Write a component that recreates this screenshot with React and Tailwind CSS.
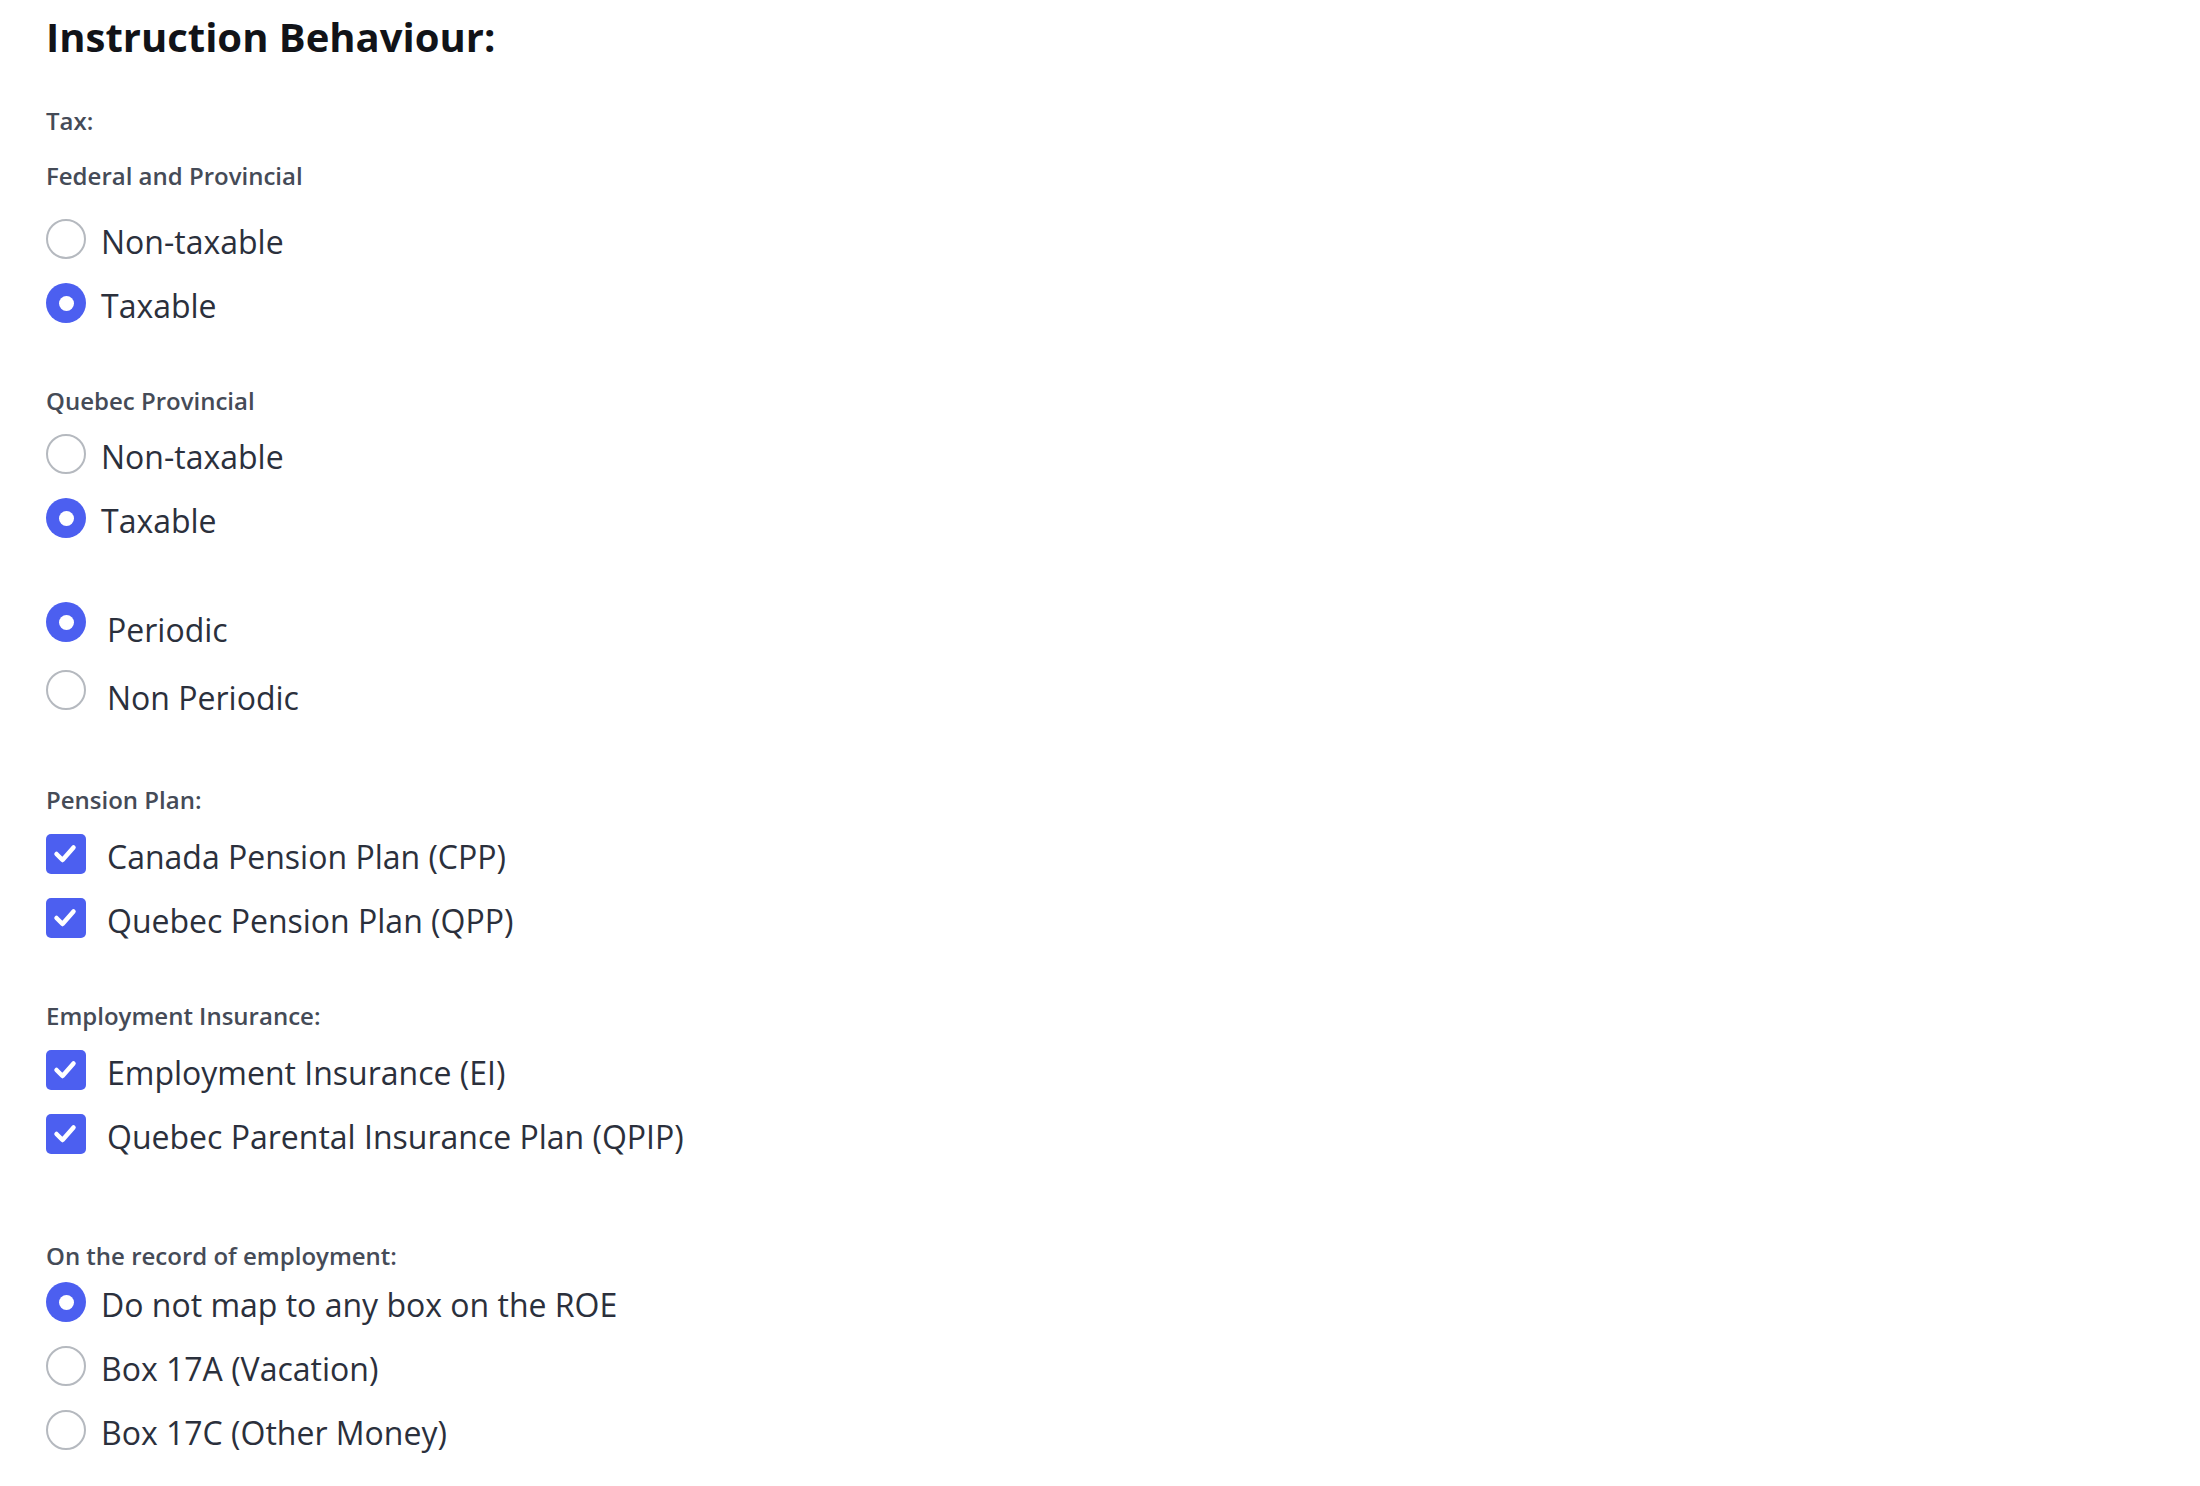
import React from "react";

const Radio = ({ checked }) =>
  checked ? (
    <span className="flex h-[40px] w-[40px] shrink-0 items-center justify-center rounded-full bg-[#4c5ff0]">
      <span className="h-[15px] w-[15px] rounded-full bg-white" />
    </span>
  ) : (
    <span className="h-[40px] w-[40px] shrink-0 rounded-full border-2 border-[#b5b9bf] bg-white" />
  );

const Check = () => (
  <span className="flex h-[40px] w-[40px] shrink-0 items-center justify-center rounded-[5px] bg-[#4c5ff0]">
    <svg width="40" height="40" viewBox="0 0 40 40" fill="none">
      <polyline
        points="10.5,20 16.5,26 27.5,13.5"
        stroke="white"
        strokeWidth="4.5"
        strokeLinecap="round"
        strokeLinejoin="round"
      />
    </svg>
  </span>
);

const RadioRow = ({ checked, label }) => (
  <div className="flex h-[64px] items-center gap-[15px]">
    <Radio checked={checked} />
    <span className="pt-[6px] text-[32px] leading-[40px] text-[#2b303c]">{label}</span>
  </div>
);

const PeriodicRow = ({ checked, label }) => (
  <div className="flex h-[68px] items-center gap-[21px]">
    <Radio checked={checked} />
    <span className="pt-[15px] text-[32px] leading-[40px] text-[#2b303c]">{label}</span>
  </div>
);

const CheckRow = ({ label }) => (
  <div className="flex h-[64px] items-center gap-[21px]">
    <Check />
    <span className="pt-[6px] text-[32px] leading-[40px] text-[#2b303c]">{label}</span>
  </div>
);

const Label = ({ children, className }) => (
  <div className={"text-[24px] font-semibold leading-[26px] text-[#454b57] " + className}>{children}</div>
);

export default function App() {
  return (
    <div
      className="min-h-[1486px] w-full bg-white pl-[46px] pt-[13px]"
      style={{ fontFamily: '"Open Sans", "Noto Sans", sans-serif' }}
    >
      <h1 className="text-[40px] font-bold leading-[48px] text-[#111318]">Instruction Behaviour:</h1>

      <Label className="mt-[47px]">Tax:</Label>
      <Label className="mt-[29px]">Federal and Provincial</Label>
      <div className="mt-[18px] flex flex-col">
        <RadioRow label="Non-taxable" />
        <RadioRow checked label="Taxable" />
      </div>

      <Label className="mt-[53px]">Quebec Provincial</Label>
      <div className="mt-[8px] flex flex-col">
        <RadioRow label="Non-taxable" />
        <RadioRow checked label="Taxable" />
      </div>

      <div className="mt-[38px] flex flex-col">
        <PeriodicRow checked label="Periodic" />
        <PeriodicRow label="Non Periodic" />
      </div>

      <Label className="mt-[63px]">Pension Plan:</Label>
      <div className="mt-[9px] flex flex-col">
        <CheckRow label="Canada Pension Plan (CPP)" />
        <CheckRow label="Quebec Pension Plan (QPP)" />
      </div>

      <Label className="mt-[53px]">Employment Insurance:</Label>
      <div className="mt-[9px] flex flex-col">
        <CheckRow label="Employment Insurance (EI)" />
        <CheckRow label="Quebec Parental Insurance Plan (QPIP)" />
      </div>

      <Label className="mt-[77px]">On the record of employment:</Label>
      <div className="mt-[1px] flex flex-col">
        <RadioRow checked label="Do not map to any box on the ROE" />
        <RadioRow label="Box 17A (Vacation)" />
        <RadioRow label="Box 17C (Other Money)" />
      </div>
    </div>
  );
}
